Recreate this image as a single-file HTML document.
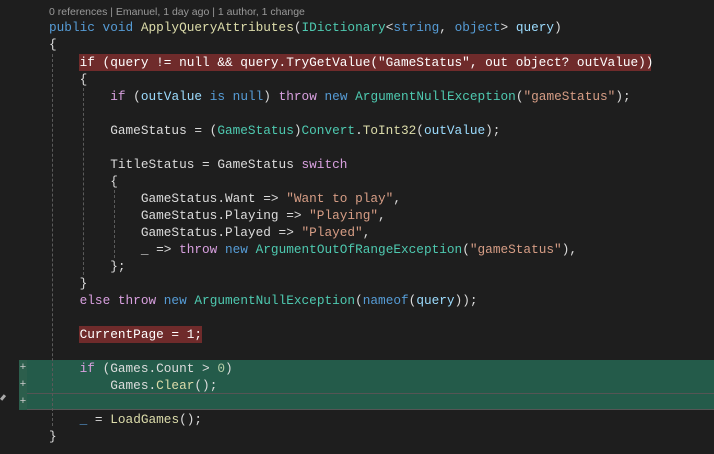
<!DOCTYPE html>
<html><head><style>
body{margin:0;width:714px;height:454px;background:#1e1e1e;overflow:hidden;position:relative;font-family:"Liberation Mono",monospace;font-size:12.75px;color:#dcdcdc}
.l{position:absolute;left:49px;white-space:pre;height:17px;line-height:17px}
.k{color:#569cd6}.c{color:#d8a0df}.t{color:#4ec9b0}.m{color:#dcdcaa}.s{color:#d69d85}.p{color:#9cdcfe}.n{color:#b5cea8}
.ref{position:absolute;left:49px;top:6px;font-family:"Liberation Sans",sans-serif;font-size:10.5px;color:#999}
.g{position:absolute;width:0;border-left:1px dashed #5a5a5a}
.pl{position:absolute;left:19px;width:8px;color:#ccc;font-size:11px;line-height:17px;text-align:center;font-family:"Liberation Sans",sans-serif}
</style></head><body>
<div style="position:absolute;left:79px;top:54px;width:572px;height:17px;background:#6f2b2b"></div>
<div style="position:absolute;left:79px;top:326px;width:123px;height:17px;background:#6f2b2b"></div>
<div style="position:absolute;left:27px;top:360px;width:687px;height:50px;background:#245b4a"></div>
<div style="position:absolute;left:19px;top:360px;width:8px;height:50px;background:#2c5e4c"></div>
<div style="position:absolute;left:27px;top:393px;width:687px;height:15px;border-top:1px solid #555;border-bottom:1px solid #555"></div>
<div class="g" style="left:52px;top:54px;height:372px"></div>
<div class="g" style="left:83px;top:88px;height:187px"></div>
<div class="g" style="left:114px;top:190px;height:68px"></div>
<div class="pl" style="top:359px">+</div><div class="pl" style="top:376px">+</div><div class="pl" style="top:393px">+</div>
<div style="position:absolute;left:0;top:396px;width:6px;height:3px;background:#aaa;transform:rotate(-50deg)"></div>
<div class="ref">0 references | Emanuel, 1 day ago | 1 author, 1 change</div>
<div class="l" style="top:19px"><span class="k">public void</span> <span class="m">ApplyQueryAttributes</span>(<span class="t">IDictionary</span>&lt;<span class="k">string</span>, <span class="k">object</span>&gt; <span class="p">query</span>)</div>
<div class="l" style="top:36px">{</div>
<div class="l" style="top:54px;color:#fff">    if (query != null &amp;&amp; query.TryGetValue("GameStatus", out object? outValue))</div>
<div class="l" style="top:71px">    {</div>
<div class="l" style="top:88px">        <span class="c">if</span> (<span class="p">outValue</span> <span class="k">is null</span>) <span class="c">throw</span> <span class="k">new</span> <span class="t">ArgumentNullException</span>(<span class="s">"gameStatus"</span>);</div>
<div class="l" style="top:122px">        GameStatus = (<span class="t">GameStatus</span>)<span class="t">Convert</span>.<span class="m">ToInt32</span>(<span class="p">outValue</span>);</div>
<div class="l" style="top:156px">        TitleStatus = GameStatus <span class="c">switch</span></div>
<div class="l" style="top:173px">        {</div>
<div class="l" style="top:190px">            GameStatus.Want =&gt; <span class="s">"Want to play"</span>,</div>
<div class="l" style="top:207px">            GameStatus.Playing =&gt; <span class="s">"Playing"</span>,</div>
<div class="l" style="top:224px">            GameStatus.Played =&gt; <span class="s">"Played"</span>,</div>
<div class="l" style="top:241px">            _ =&gt; <span class="c">throw</span> <span class="k">new</span> <span class="t">ArgumentOutOfRangeException</span>(<span class="s">"gameStatus"</span>),</div>
<div class="l" style="top:258px">        };</div>
<div class="l" style="top:275px">    }</div>
<div class="l" style="top:292px">    <span class="c">else throw</span> <span class="k">new</span> <span class="t">ArgumentNullException</span>(<span class="k">nameof</span>(<span class="p">query</span>));</div>
<div class="l" style="top:326px;color:#fff">    CurrentPage = 1;</div>
<div class="l" style="top:360px">    <span class="c">if</span> (Games.Count &gt; <span class="n">0</span>)</div>
<div class="l" style="top:377px">        Games.<span class="m">Clear</span>();</div>
<div class="l" style="top:411px">    <span class="k">_</span> = <span class="m">LoadGames</span>();</div>
<div class="l" style="top:428px">}</div>
</body></html>
